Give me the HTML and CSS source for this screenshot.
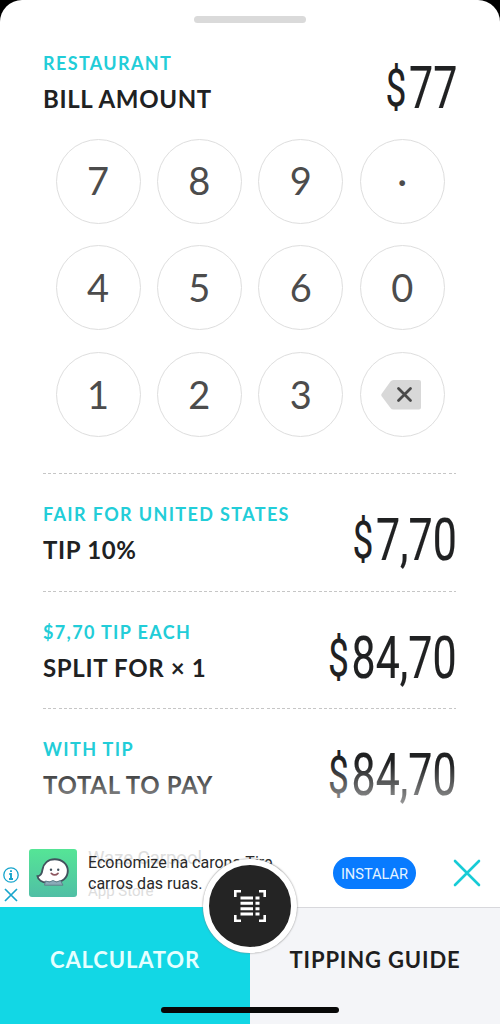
FILE: index.html
```html
<!DOCTYPE html>
<html lang="en">
<head>
<meta charset="utf-8">
<title>Tip calculator</title>
<link rel="stylesheet" href="styles.css">
</head>
<body>
<div class="screen">
  <main class="sheet">
    <div class="grabber"></div>
    <section class="row bill">
      <div class="labels"><div class="label">RESTAURANT</div><div class="title">BILL AMOUNT</div></div>
      <div class="amount"><span class="cur">$</span>77</div>
    </section>
    <div class="keypad">
      <button class="key">7</button><button class="key">8</button><button class="key">9</button><button class="key">·</button>
      <button class="key">4</button><button class="key">5</button><button class="key">6</button><button class="key">0</button>
      <button class="key">1</button><button class="key">2</button><button class="key">3</button>
      <button class="key del-key" aria-label="Delete"><svg class="del" width="40" height="30" viewBox="0 0 40 30"><path d="M0.500 14 9.500 1.500Q10.500 0 12.500 0H38Q40 0 40 2V27.500Q40 29.500 38 29.500H12.500Q10.500 29.500 9.500 28L0.500 16Q0 15 0.500 14Z" fill="#d8d8d8"/><path d="M17.500 8.500 29.500 20.500M29.500 8.500 17.500 20.500" stroke="#4a4a4a" stroke-width="2.800" stroke-linecap="round"/></svg></button>
    </div>
    <section class="row ruled">
      <div class="labels"><div class="label">FAIR FOR UNITED STATES</div><div class="title">TIP 10%</div></div>
      <div class="amount"><span class="cur">$</span>7,70</div>
    </section>
    <section class="row ruled">
      <div class="labels"><div class="label">$7,70 TIP EACH</div><div class="title">SPLIT FOR × 1</div></div>
      <div class="amount"><span class="cur">$</span>84,70</div>
    </section>
    <section class="row ruled">
      <div class="labels"><div class="label">WITH TIP</div><div class="title">TOTAL TO PAY</div></div>
      <div class="amount"><span class="cur">$</span>84,70</div>
    </section>
    <div class="fade"></div>
  </main>
  <aside class="ad">
    <div class="ad-tools">
      <svg width="16" height="16" viewBox="0 0 16 16" fill="none" stroke="#18a5cc"><circle cx="8" cy="8" r="7.200" stroke-width="1.300"/><path d="M8 3.300V5.100M6.300 7H8V12M6 12H10" stroke-width="1.900"/></svg>
      <svg width="14" height="14" viewBox="0 0 14 14"><path d="M1 1 13 13M13 1 1 13" stroke="#18a5cc" stroke-width="1.700"/></svg>
    </div>
    <svg class="ad-icon" width="48" height="48" viewBox="0 0 48 48">
      <defs><linearGradient id="g" x1="0" y1="0" x2="0" y2="1"><stop offset="0" stop-color="#55e596"/><stop offset="1" stop-color="#50bfa5"/></linearGradient></defs>
      <rect width="48" height="48" rx="3" fill="url(#g)"/>
      <path d="M8.500 27.200C12 27 13 24.500 13.500 20.500C14.500 14.500 19 10.200 25.800 10.200C33 10.200 38.800 15 38.800 21.800C38.800 28.500 33.500 33.500 26 33.500H18C13 33.500 9 31 8.500 27.200Z" fill="#fff" stroke="#42525d" stroke-width="1.900"/>
      <path d="M15.500 36.200 16.500 32 20.500 33 24 31.500 27.500 33 31.500 31.500 34 36.200Z" fill="#8aabb9" stroke="#60808c" stroke-width="1" stroke-linejoin="round"/>
      <circle cx="22" cy="20.800" r="1.200" fill="#42525d"/><circle cx="29.200" cy="20.800" r="1.200" fill="#42525d"/>
      <path d="M22.300 24.300Q25.800 27.500 29 24.300" fill="none" stroke="#8e5760" stroke-width="1.700" stroke-linecap="round"/>
    </svg>
    <div class="ad-copy">
      <div class="ghost"><div class="ghost-name">Waze Carpool</div><div class="ghost-store">App Store</div></div>
      <div class="ad-text">Economize na carona.Tire<br>carros das ruas.</div>
    </div>
    <button class="install">INSTALAR</button>
    <svg class="close" width="28" height="28" viewBox="0 0 28 28"><path d="M2 2 26 26M26 2 2 26" stroke="#17cbd6" stroke-width="2.600" stroke-linecap="round"/></svg>
  </aside>
  <nav class="tabs">
    <div class="tab active">CALCULATOR</div>
    <div class="tab">TIPPING GUIDE</div>
    <div class="scan">
      <svg width="32" height="32" viewBox="0 0 32 32" fill="none" stroke="#fff"><path d="M1.300 7V1.300H7M25 1.300H30.700V7M30.700 25V30.700H25M7 30.700H1.300V25" stroke-width="2.600"/><path d="M6.500 8H19M6.500 13.300H19M6.500 18.700H19M6.500 24H19M21.500 8H25.500M21.500 13.300H25.500M21.500 18.700H25.500M21.500 24H25.500" stroke-width="2.900"/></svg>
    </div>
    <div class="home"></div>
  </nav>
</div>
</body>
</html>
```
FILE: styles.css
```css
* { box-sizing: border-box; }
body { margin: 0; background: #000; font-family: Lato, sans-serif; }
button { border: 0; padding: 0; margin: 0; font-family: inherit; }
.screen { width: 500px; height: 1024px; display: flex; flex-direction: column; overflow: hidden; }
.sheet { position: relative; height: 840px; background: #fff; border-radius: 22px 22px 0 0; padding: 16px 44px 0 43px; }
.grabber { width: 112px; height: 7px; margin: 0 auto; border-radius: 4px; background: #dadada; }
.row { height: 117.3px; display: flex; justify-content: space-between; }
.bill { height: 115.5px; }
.ruled { background: repeating-linear-gradient(90deg, #c6c6c6 0 3px, transparent 3px 5.2px) 0 0 / 100% 1.3px no-repeat; }
.labels { padding-top: 29px; white-space: nowrap; }
.label { font-size: 18px; line-height: 24px; font-weight: 700; letter-spacing: 1.36px; color: #22cdd8; }
.title { margin-top: 9px; font-size: 24px; line-height: 30px; font-weight: 700; letter-spacing: 0.66px; color: #202122; }
.amount { padding-top: 31px; font-family: Roboto, sans-serif; font-size: 60px; line-height: 72px; height: 103px; color: #202122; -webkit-text-stroke: 0.15px; white-space: nowrap; transform: translateX(0.8px) scaleX(0.715); transform-origin: right; }
.cur { display: inline-block; width: 33px; font-size: 52px; line-height: 60px; vertical-align: 2px; }
.bill .labels { padding-top: 27.5px; }
.bill .amount { padding-top: 29px; }
.keypad { display: grid; grid-template-columns: repeat(4, 85px); column-gap: 16.4px; row-gap: 21.8px; margin: 0 0 36.4px 12.5px; }
.key { width: 85px; height: 85px; padding-bottom: 2px; border: 1.5px solid #dedede; border-radius: 50%; background: #fff; color: #4c4c4c; font-size: 38px; line-height: 46px; display: flex; align-items: center; justify-content: center; }
.del-key { padding-bottom: 0; }
.del { margin-left: -2px; }
.fade { position: absolute; left: 0; right: 0; top: 763px; height: 77px; background: linear-gradient(rgba(255,255,255,0), #fff); }
.ad { height: 67px; background: #fff; display: flex; padding-top: 9px; font-family: Roboto, sans-serif; }
.ad-tools { width: 29px; padding: 18px 0 0 3px; display: flex; flex-direction: column; gap: 5px; }
.ad-tools svg + svg { margin-left: 1px; }
.ad-icon { flex: none; }
.ad-copy { position: relative; width: 245px; margin-left: 11px; padding-top: 3px; }
.ghost { position: absolute; left: 0; top: -3px; color: #ddd; white-space: nowrap; }
.ghost-name { font-size: 18.5px; line-height: 24px; }
.ghost-store { font-size: 15px; line-height: 18px; margin-top: 12px; }
.ad-text { position: relative; font-size: 16px; line-height: 21px; color: #292929; white-space: nowrap; }
.install { width: 83px; height: 32px; margin-top: 8px; padding-top: 1px; border-radius: 16px; background: #087bff; color: #e5f4ff; font-size: 14.6px; }
.close { margin: 10px 0 0 37px; }
.tabs { position: relative; flex: 1; display: grid; grid-template-columns: 1fr 1fr; }
.tab { background: #f4f5f8; border-top: 1px solid #d8d8dc; text-align: center; padding-top: 38.4px; font-size: 22px; line-height: 28px; font-weight: 700; letter-spacing: 0.85px; color: #1e1e20; white-space: nowrap; }
.tab.active { background: #12d7e5; border-color: #12d7e5; color: #e5ffff; }
.scan { position: absolute; left: 203px; top: -48px; width: 94px; height: 94px; border: 6px solid #fff; border-radius: 50%; background: #242424; box-shadow: 0 0 2px #777; display: flex; align-items: center; justify-content: center; }
.home { position: absolute; left: 161px; bottom: 11px; width: 178px; height: 6px; border-radius: 3px; background: #080808; }
```
